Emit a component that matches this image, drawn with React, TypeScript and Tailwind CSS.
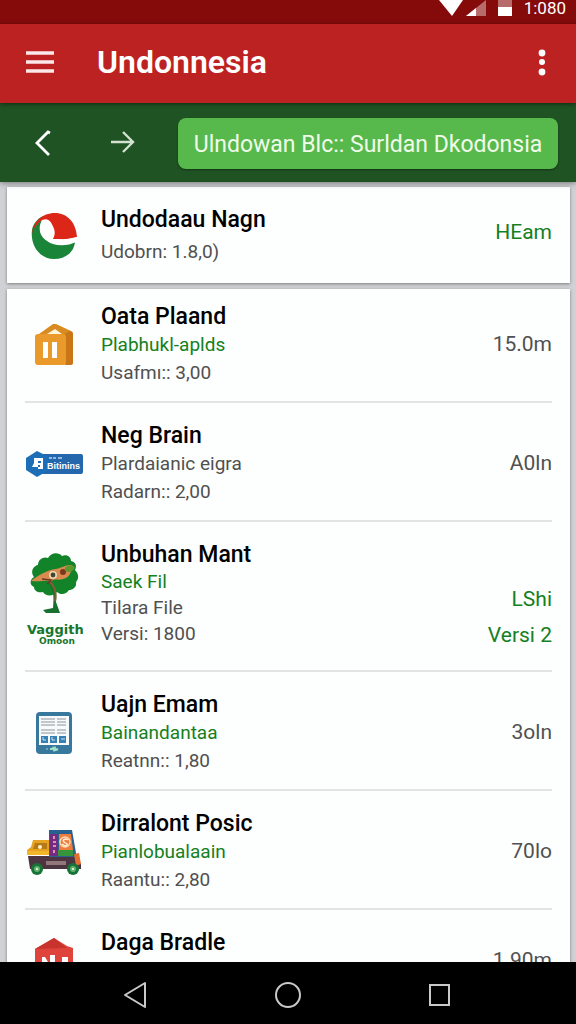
import type { ReactNode } from "react";

type Item = {
  title: string;
  lines: { text: string; green?: boolean }[];
  values: string[];
  green?: boolean;
  icon: ReactNode;
};

function GlobeLogo() {
  return (
    <svg viewBox="0 0 46 48" className="h-12 w-[46px]" aria-hidden="true">
      <path d="M1 18C-1 34 9 47 23 47c12 0 20-7 21-17-8 3-18 2-25-3C11 22 8 12 12 4 6 7 2 12 1 18z" fill="#1a8438" />
      <path d="M1 22C2 10 11 1 24 1c12 0 21 9 22 24-8 3-15 2-24 2 3-5 2-11-2-15-3-4-6-5-9-4-4 3-9 8-10 14z" fill="#dc2618" />
      <path d="M10 10c5-6 11-1 12 6 1 5-4 8-2 11 7 2 17 0 26-2l-1 5c-8 4-21 5-29-1-7-4-9-12-6-19z" fill="#fff" />
    </svg>
  );
}

function BagLogo() {
  return (
    <svg viewBox="0 0 38 42" className="h-[42px] w-[38px]" aria-hidden="true">
      <path d="M4 10 18 0h3l15 7-5 5z" fill="#d98a20" />
      <path d="M12 10 20 5l7 5z" fill="#fff4dc" />
      <path d="M30 10l5-3q3 0 3 3v29q0 2-3 2h-5z" fill="#c97616" />
      <rect y="10" width="31" height="31" rx="3" fill="#e99a2a" />
      <path d="M8 18h5v16H8zM17 18h5v16h-5z" fill="#fff" />
    </svg>
  );
}

function BadgeLogo() {
  return (
    <svg viewBox="0 0 58 26" className="h-[26px] w-[58px]" aria-hidden="true">
      <rect x="14" y="3" width="44" height="20" rx="2" fill="#2567ac" />
      <path d="M1 7 12 0l12 6v13l-12 7L1 19z" fill="#1c6fb7" />
      <path d="M9 7h9v11h-5v-2H7l2-4z" fill="#fff" />
      <path d="M13 10h3v2h-3zM13 14h2v2h-2z" fill="#1c6fb7" />
      <path d="M24 7h3m1 0h3m2 0h4" stroke="#8dbbe3" strokeWidth="2" />
      <text x="22" y="18" fontFamily="Liberation Sans, sans-serif" fontSize="9" fontWeight="700" fill="#fff">Bitinins</text>
    </svg>
  );
}

function TreeLogo() {
  return (
    <svg viewBox="0 0 58 92" className="h-[92px] w-[58px]" aria-hidden="true">
      <g transform="translate(3 0)">
        <path d="M6 34C1 32 2 26 6 24 2 19 5 13 10 12c0-6 6-9 10-7 3-6 11-6 14-2 5-2 9 1 9 5 5 1 6 5 4 9 4 4 4 9 1 12 1 5-3 8-7 8-3 5-9 5-12 2-4 5-12 4-14 0-5 1-9-1-9-5z" fill="#13832a" />
        <path d="M22 28c6 7 7 12 6 21l4 11H18l-3-3 10-2c1-11 1-19-5-25z" fill="#17702f" />
        <path d="M20 26c6 7 9 12 7 22" fill="none" stroke="#855c34" strokeWidth="2" />
        <path d="M3 28c6-5 16-11 25-12 7-1 12-6 17-3-2 5-3 12-10 13-5 2-8-1-11 2-6-1-13 1-21 0z" fill="#d98b4f" />
        <circle cx="25" cy="22" r="4" fill="#f1d6b4" />
        <circle cx="25" cy="22" r="2.4" fill="#3c4937" />
        <circle cx="35" cy="19" r="3" fill="#7a3820" />
        <path d="M37 15c3-4 7-3 10-1-2 5-6 6-10 4z" fill="#5c982e" />
        <path d="M14 26l9 1-4 4" fill="none" stroke="#673a23" strokeWidth="1.5" />
      </g>
      <text x="2" y="81" fontFamily="DejaVu Sans, sans-serif" fontSize="13" fontWeight="700" fill="#16762d">Vaggith</text>
      <text x="14" y="91" fontFamily="DejaVu Sans, sans-serif" fontSize="9" fontWeight="700" fill="#16762d">Omoon</text>
    </svg>
  );
}

function TabletLogo() {
  return (
    <svg viewBox="0 0 36 42" className="h-[42px] w-9" aria-hidden="true">
      <rect width="36" height="42" rx="4" fill="#38789c" />
      <path d="M3 4h30v29H3z" fill="#f6fafb" />
      <path d="M5 7h14M5 10h14M5 13h14M5 18h14M5 21h14M21 7h9M21 10h9M21 13h9M21 18h9M21 21h9" stroke="#b2b6bc" strokeWidth="1.5" />
      <path d="M5 24h7v7H5zM14 24h7v7h-7zM23 24h7v7h-7z" fill="#3780b4" />
      <path d="M7 25v3h3M16 25v3h3M25 27h4" fill="none" stroke="#cbe5f5" />
      <circle cx="11" cy="37" r="1" fill="#76b8cf" />
      <path d="M14 37h2l1-1 1 2 1-2 1 2 2-1" fill="none" stroke="#a0e1c7" strokeWidth="2" />
    </svg>
  );
}

function TruckLogo() {
  return (
    <svg viewBox="0 0 56 46" className="h-[46px] w-14" aria-hidden="true">
      <path d="M2 27h48l5 8v5H4z" fill="#4c3540" />
      <path d="M7 11h17v14H1v-4l4-3z" fill="#e5a321" />
      <path d="M9 14h12v6H7z" fill="#b57a17" />
      <path d="M1 22h23v4H1z" fill="#f3b529" />
      <circle cx="14" cy="18" r="2" fill="#fff0c2" />
      <path d="M23 1h23l4 23v4H23z" fill="#28618f" />
      <path d="M24 5h8v22h-8z" fill="#722c82" />
      <path d="M28 7v3m-1 3h3m-3 4h3m-2 4v3" fill="none" stroke="#e98db0" strokeWidth="2" />
      <path d="M33 5h12l2 16H33z" fill="#ed7d3c" />
      <circle cx="39" cy="13" r="5" fill="none" stroke="#fbd9b5" strokeWidth="1.5" />
      <path d="M42 11c-3-2-6 0-4 2s4 1 3 3-4 0-5-1" fill="none" stroke="#fff0d8" strokeWidth="1.5" />
      <path d="M32 21h15v6H32z" fill="#36953a" />
      <path d="M48 25l5-1 2 11-5 2z" fill="#e36e2d" />
      <path d="M20 32h20v4H20z" fill="#92767a" />
      <circle cx="11" cy="40" r="6" fill="#187338" />
      <circle cx="11" cy="40" r="3" fill="#62b36c" />
      <circle cx="11" cy="40" r="1" fill="#fff" />
      <circle cx="47" cy="40" r="6" fill="#187338" />
      <circle cx="47" cy="40" r="3" fill="#62b36c" />
      <circle cx="47" cy="40" r="1" fill="#fff" />
    </svg>
  );
}

function HouseLogo() {
  return (
    <svg viewBox="0 0 40 48" className="h-12 w-10" aria-hidden="true">
      <path d="M1 11 20 0l13 8 6 2v38H1z" fill="#df443c" />
      <path d="M1 11 20 0l13 10z" fill="#c9332d" />
      <path d="M8 19h3l3 5v24H8zM16 17h5v31h-5zM28 19h6v29h-6z" fill="#fff" />
    </svg>
  );
}

const featured: Item = {
  title: "Undodaau Nagn",
  lines: [{ text: "Udobrn: 1.8,0)" }],
  values: ["HEam"],
  green: true,
  icon: <GlobeLogo />,
};

const items: Item[] = [
  { title: "Oata Plaand", lines: [{ text: "Plabhukl-aplds", green: true }, { text: "Usafmı:: 3,00" }], values: ["15.0m"], icon: <BagLogo /> },
  { title: "Neg Brain", lines: [{ text: "Plardaianic eigra" }, { text: "Radarn:: 2,00" }], values: ["A0ln"], icon: <BadgeLogo /> },
  { title: "Unbuhan Mant", lines: [{ text: "Saek Fil", green: true }, { text: "Tilara File" }, { text: "Versi: 1800" }], values: ["LShi", "Versi 2"], green: true, icon: <TreeLogo /> },
  { title: "Uajn Emam", lines: [{ text: "Bainandantaa", green: true }, { text: "Reatnn:: 1,80" }], values: ["3oln"], icon: <TabletLogo /> },
  { title: "Dirralont Posic", lines: [{ text: "Pianlobualaain", green: true }, { text: "Raantu:: 2,80" }], values: ["70lo"], icon: <TruckLogo /> },
  { title: "Daga Bradle", lines: [{ text: "Bantuan" }], values: ["1.90m"], icon: <HouseLogo /> },
];

function Entry({ item, roomy = false }: { item: Item; roomy?: boolean }) {
  const tall = item.values.length > 1;
  const leading = roomy ? "leading-8" : tall ? "leading-[26px]" : "leading-7";
  return (
    <>
      <div className="flex w-[58px] shrink-0 items-center justify-center">{item.icon}</div>
      <div className="ml-[18px] min-w-0 flex-1">
        <h2 className={`truncate text-[23px] font-medium text-black ${roomy ? "leading-8" : "leading-7"}`}>{item.title}</h2>
        {item.lines.map((line) => (
          <p key={line.text} className={`truncate text-[19px] ${leading} ${line.green ? "text-[#148021]" : "text-[#505050]"}`}>
            {line.text}
          </p>
        ))}
      </div>
      <div
        className={`shrink-0 text-right text-[21px] leading-9 ${tall ? "self-end" : "self-center"} ${roomy ? "pb-2" : "pb-[3px]"} ${item.green ? "text-[#148021]" : "text-[#505050]"}`}
      >
        {item.values.map((value) => (
          <p key={value}>{value}</p>
        ))}
      </div>
    </>
  );
}

export default function App() {
  return (
    <div className="flex h-screen flex-col overflow-hidden bg-[#d0d1d4] font-[Roboto,sans-serif]">
      <div className="flex h-6 shrink-0 items-start justify-end bg-[#850b0b] pr-[10px] text-white">
        <svg viewBox="0 0 76 17" className="mr-[9px] h-[17px] w-[76px]" aria-hidden="true">
          <path d="M0 0h24L13 16z" fill="#fff" />
          <path d="M27 16 47 0v16z" fill="#b86b6b" />
          <path d="M27 16l10-8v8z" fill="#fff" />
          <path d="M59 0h14v7H59z" fill="#b86b6b" />
          <path d="M59 7h14v9H59z" fill="#fff" />
        </svg>
        <span className="text-[17px] leading-[17px]">1:080</span>
      </div>

      <header className="z-20 flex h-[79px] shrink-0 items-center bg-[#bd2222] pr-5 pb-[3px] pl-[26px] text-white shadow-[0_1px_4px_rgba(0,0,0,0.5)]">
        <button type="button" aria-label="Menu">
          <svg viewBox="0 0 28 24" className="h-6 w-7" aria-hidden="true">
            <path d="M0 3h28M0 12h28M0 21h28" stroke="#fbe9e9" strokeWidth="3.6" />
          </svg>
        </button>
        <h1 className="ml-[43px] flex-1 text-[32px] leading-10 font-semibold">Undonnesia</h1>
        <button type="button" aria-label="More options" className="flex w-7 justify-center">
          <svg viewBox="0 0 8 28" className="h-7 w-2" fill="#fff" aria-hidden="true">
            <circle cx="4" cy="5" r="3.4" />
            <circle cx="4" cy="14" r="3" />
            <circle cx="4" cy="24" r="3.4" />
          </svg>
        </button>
      </header>

      <nav className="z-10 flex h-[79px] shrink-0 items-center bg-[#1f5323] pr-[18px] pl-[34px] text-white shadow-[0_1px_6px_rgba(0,0,0,0.45)]">
        <button type="button" aria-label="Back">
          <svg viewBox="0 0 18 26" className="h-[26px] w-[18px]" fill="none" aria-hidden="true">
            <path d="M16 3l-2-1L3 13l12 12" stroke="#fff" strokeWidth="2.8" />
          </svg>
        </button>
        <button type="button" aria-label="Forward" className="ml-[58px]">
          <svg viewBox="0 0 26 24" className="h-6 w-[26px]" fill="none" aria-hidden="true">
            <path d="M1 11h22M13 1l10 10-10 10" stroke="#d2e2cf" strokeWidth="2.4" />
          </svg>
        </button>
        <button
          type="button"
          className="mt-[2px] ml-[42px] h-[51px] min-w-0 flex-1 truncate rounded-lg bg-[#57b94b] px-3 pt-[3px] text-[23px] text-[#f0fbea] shadow-[0_1px_2px_rgba(0,0,0,0.4)]"
        >
          Ulndowan Blc:: Surldan Dkodonsia
        </button>
      </nav>

      <main className="min-h-0 flex-1 overflow-hidden pt-[5px] pr-[6px] pl-[7px]">
        <section className="flex bg-[#fdfefe] px-[18px] pt-[17px] pb-[15px] shadow-[0_1px_3px_rgba(0,0,0,0.4)]">
          <Entry item={featured} roomy />
        </section>
        <ul className="mt-[6px] bg-[#fdfefe] px-[18px] shadow-[0_1px_3px_rgba(0,0,0,0.4)]">
          {items.map((item) => (
            <li
              key={item.title}
              className={`flex border-b-2 border-[#e2e4e4] pt-[19px] pb-[14px] first:pt-[14px] ${item.values.length > 1 ? "min-h-[150px]" : "min-h-[100px]"}`}
            >
              <Entry item={item} />
            </li>
          ))}
        </ul>
      </main>

      <footer className="z-10 flex h-[62px] shrink-0 items-center justify-between bg-black px-[120px] pt-1">
        <button type="button" aria-label="System back">
          <svg viewBox="0 0 32 32" className="h-8 w-8" fill="none" aria-hidden="true">
            <path d="M25 4v24L5 16z" stroke="#c9c9c9" strokeWidth="2" strokeLinejoin="round" />
          </svg>
        </button>
        <button type="button" aria-label="Home">
          <svg viewBox="0 0 32 32" className="h-8 w-8" fill="none" aria-hidden="true">
            <circle cx="16" cy="16" r="12" stroke="#c9c9c9" strokeWidth="2" />
          </svg>
        </button>
        <button type="button" aria-label="Recent apps">
          <svg viewBox="0 0 32 32" className="h-8 w-8" fill="none" aria-hidden="true">
            <rect x="6" y="6" width="19" height="20" stroke="#c9c9c9" strokeWidth="2" />
          </svg>
        </button>
      </footer>
    </div>
  );
}
